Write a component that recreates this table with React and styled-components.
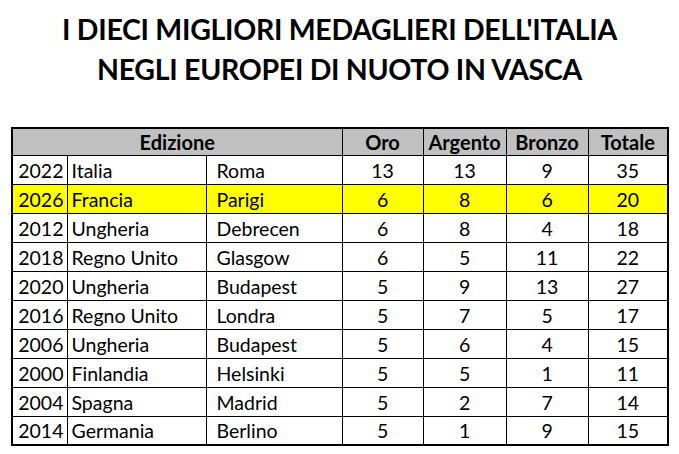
import React from "react";
import styled, { createGlobalStyle } from "styled-components";

const GlobalStyle = createGlobalStyle`
  html, body {
    margin: 0;
    padding: 0;
    background: #ffffff;
  }
  body {
    font-family: Lato, "Open Sans", "Liberation Sans", sans-serif;
    color: #000;
  }
`;

const rows = [
  { year: 2022, country: "Italia", city: "Roma", oro: 13, argento: 13, bronzo: 9, totale: 35 },
  { year: 2026, country: "Francia", city: "Parigi", oro: 6, argento: 8, bronzo: 6, totale: 20, highlight: true },
  { year: 2012, country: "Ungheria", city: "Debrecen", oro: 6, argento: 8, bronzo: 4, totale: 18 },
  { year: 2018, country: "Regno Unito", city: "Glasgow", oro: 6, argento: 5, bronzo: 11, totale: 22 },
  { year: 2020, country: "Ungheria", city: "Budapest", oro: 5, argento: 9, bronzo: 13, totale: 27 },
  { year: 2016, country: "Regno Unito", city: "Londra", oro: 5, argento: 7, bronzo: 5, totale: 17 },
  { year: 2006, country: "Ungheria", city: "Budapest", oro: 5, argento: 6, bronzo: 4, totale: 15 },
  { year: 2000, country: "Finlandia", city: "Helsinki", oro: 5, argento: 5, bronzo: 1, totale: 11 },
  { year: 2004, country: "Spagna", city: "Madrid", oro: 5, argento: 2, bronzo: 7, totale: 14 },
  { year: 2014, country: "Germania", city: "Berlino", oro: 5, argento: 1, bronzo: 9, totale: 15 },
];

const colWidths = [55, 139, 136, 81, 83, 82, 80];

const App = () => {
  return (
    <Page>
      <GlobalStyle />
      <Title>
        <TitleLine>I DIECI MIGLIORI MEDAGLIERI DELL'ITALIA</TitleLine>
        <TitleLine>NEGLI EUROPEI DI NUOTO IN VASCA</TitleLine>
      </Title>
      <Table>
        <colgroup>
          {colWidths.map((w, i) => (
            <col key={i} style={{ width: w }} />
          ))}
        </colgroup>
        <thead>
          <HeadRow>
            <HeadCell colSpan={3}>Edizione</HeadCell>
            <HeadCell>Oro</HeadCell>
            <HeadCell>Argento</HeadCell>
            <HeadCell>Bronzo</HeadCell>
            <HeadCell>Totale</HeadCell>
          </HeadRow>
        </thead>
        <tbody>
          {rows.map((r) => (
            <Row key={r.year} $highlight={r.highlight}>
              <Cell $align="right">{r.year}</Cell>
              <Cell $align="left">{r.country}</Cell>
              <Cell $align="left" $indent>
                {r.city}
              </Cell>
              <Cell>{r.oro}</Cell>
              <Cell>{r.argento}</Cell>
              <Cell>{r.bronzo}</Cell>
              <Cell>{r.totale}</Cell>
            </Row>
          ))}
        </tbody>
      </Table>
    </Page>
  );
};

const Page = styled.div`
  width: 679px;
  height: 454px;
  overflow: hidden;
  background: #fff;
`;

const Title = styled.div`
  padding-top: 9px;
  display: flex;
  flex-direction: column;
  align-items: center;
`;

const TitleLine = styled.div`
  font-size: 28.5px;
  font-weight: 700;
  line-height: 40px;
  letter-spacing: -0.3px;
  color: #000;
  white-space: nowrap;
`;

const Table = styled.table`
  margin: 38px 0 0 11px;
  width: 656px;
  table-layout: fixed;
  border-collapse: collapse;
  border: 2px solid #000;
  font-size: 19.5px;
`;

const HeadRow = styled.tr`
  height: 27px;
  background: #c0c0c0;
`;

const HeadCell = styled.th`
  border: 1px solid #000;
  font-size: 20px;
  font-weight: 700;
  text-align: center;
  vertical-align: bottom;
  padding: 0 2px 1px;
  line-height: 24px;
  white-space: nowrap;
`;

const Row = styled.tr`
  height: 29px;
  background: ${(p) => (p.$highlight ? "#ffff00" : "#ffffff")};
`;

const Cell = styled.td`
  border: 1px solid #000;
  text-align: ${(p) => p.$align || "center"};
  vertical-align: bottom;
  padding: 0 ${(p) => (p.$align === "right" ? "3px" : "4px")} 1px
    ${(p) => (p.$indent ? "10px" : "4px")};
  line-height: 24px;
  white-space: nowrap;
  overflow: hidden;
`;

export default App;
